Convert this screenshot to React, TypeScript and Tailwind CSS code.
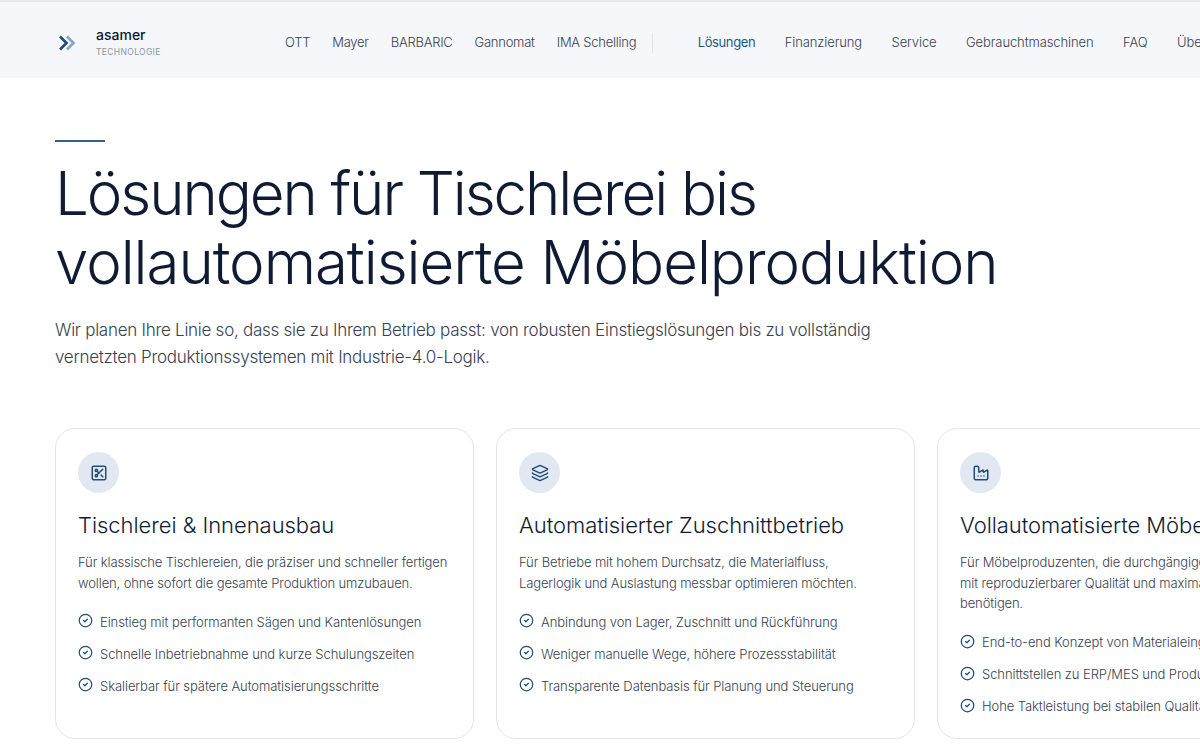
import { Layers, Factory, SquareScissors, CircleCheck } from "lucide-react";

const brands = ["OTT", "Mayer", "BARBARIC", "Gannomat", "IMA Schelling"];
const links = ["Finanzierung", "Service", "Gebrauchtmaschinen", "FAQ", "Über uns"];

const cards = [
  {
    Icon: SquareScissors,
    title: "Tischlerei & Innenausbau",
    text: ["Für klassische Tischlereien, die präziser und schneller fertigen", "wollen, ohne sofort die gesamte Produktion umzubauen."],
    items: ["Einstieg mit performanten Sägen und Kantenlösungen", "Schnelle Inbetriebnahme und kurze Schulungszeiten", "Skalierbar für spätere Automatisierungsschritte"],
  },
  {
    Icon: Layers,
    title: "Automatisierter Zuschnittbetrieb",
    text: ["Für Betriebe mit hohem Durchsatz, die Materialfluss,", "Lagerlogik und Auslastung messbar optimieren möchten."],
    items: ["Anbindung von Lager, Zuschnitt und Rückführung", "Weniger manuelle Wege, höhere Prozessstabilität", "Transparente Datenbasis für Planung und Steuerung"],
  },
  {
    Icon: Factory,
    title: "Vollautomatisierte Möbelproduktion",
    text: ["Für Möbelproduzenten, die durchgängige Prozesse", "mit reproduzierbarer Qualität und maximaler Leistung", "benötigen."],
    items: ["End-to-end Konzept von Materialeingang bis Versand", "Schnittstellen zu ERP/MES und Produktionsplanung", "Hohe Taktleistung bei stabilen Qualitätswerten"],
  },
];

export default function App() {
  return (
    <div className="w-[1200px] h-[750px] overflow-hidden bg-white font-['Inter','Liberation_Sans',sans-serif]">
      <header className="h-[78px] border-t-2 border-[#e4e7ee] bg-[#f5f7fb] flex items-center pl-[55px] pt-[5px] whitespace-nowrap">
        <div className="flex items-center w-[230px] shrink-0">
          <svg width="24" height="24" viewBox="0 0 24 24" fill="none" strokeWidth="2.6">
            <path d="M5 5.5 L11.5 12 L5 18.5" stroke="#1c4a80" />
            <path d="M12 5.5 L18.5 12 L12 18.5" stroke="#86a3c4" />
          </svg>
          <div className="ml-[17px]">
            <div className="text-[14px] leading-[18px] font-medium text-[#0f172a]">asamer</div>
            <div className="text-[8.5px] leading-[14px] mt-[1px] text-[#8a93a0] tracking-[0.35px]">TECHNOLOGIE</div>
          </div>
        </div>
        <nav className="flex items-center text-[13px] font-light text-[#374151]">
          <div className="flex items-center gap-[22px] pr-[16px] border-r border-[#dfe3ea] h-[20px] tracking-[-0.25px]">
            {brands.map((b) => (
              <span key={b}>{b}</span>
            ))}
          </div>
          <div className="flex items-center gap-[29.5px] ml-[44.5px] tracking-[-0.1px]">
            <span className="text-[#1f5a85] font-normal tracking-[-0.4px]">Lösungen</span>
            {links.map((l) => (
              <span key={l}>{l}</span>
            ))}
          </div>
        </nav>
      </header>

      <main className="pl-[55px]">
        <div className="w-[50px] h-[2px] bg-[#2f6090] mt-[62px]" />
        <h1 className="mt-[17px] text-[60px] leading-[69px] font-light text-[#0f1b33] whitespace-nowrap">
          <span className="tracking-[-2.07px]">Lösungen für Tischlerei bis</span>
          <br />
          <span className="tracking-[-1.05px]">vollautomatisierte Möbelproduktion</span>
        </h1>
        <p className="mt-[20px] text-[17px] leading-[27px] font-light text-[#374151] tracking-[-0.27px] whitespace-nowrap">
          Wir planen Ihre Linie so, dass sie zu Ihrem Betrieb passt: von robusten Einstiegslösungen bis zu vollständig
          <br />
          vernetzten Produktionssystemen mit Industrie-4.0-Logik.
        </p>

        <div className="flex gap-[22px] mt-[57px] w-[1400px]">
          {cards.map(({ Icon, title, text, items }) => (
            <section key={title} className="w-[419px] h-[311px] shrink-0 rounded-[20px] border border-[#e2e5ea] bg-white px-[22px] pt-[23px] overflow-hidden whitespace-nowrap">
              <div className="w-[41px] h-[41px] rounded-full bg-[#e1e8f2] flex items-center justify-center">
                <Icon size={18} strokeWidth={2} className="text-[#1f4e79]" />
              </div>
              <h2 className="mt-[17px] text-[22px] leading-[30px] font-light text-[#0f1b33] tracking-[-0.05px]">{title}</h2>
              <p className="mt-[12px] text-[13px] leading-[20.7px] font-light text-[#374151] tracking-[-0.12px]">
                {text.map((t) => (
                  <span key={t} className="block">{t}</span>
                ))}
              </p>
              <ul className="mt-[18px] flex flex-col gap-[10px]">
                {items.map((i) => (
                  <li key={i} className="flex items-center h-[22px] text-[13px] font-light text-[#374151] tracking-[-0.08px]">
                    <CircleCheck size={15} strokeWidth={2} className="text-[#1f4e79] shrink-0 mr-[7px] -mt-[3px]" />
                    {i}
                  </li>
                ))}
              </ul>
            </section>
          ))}
        </div>
      </main>
    </div>
  );
}
